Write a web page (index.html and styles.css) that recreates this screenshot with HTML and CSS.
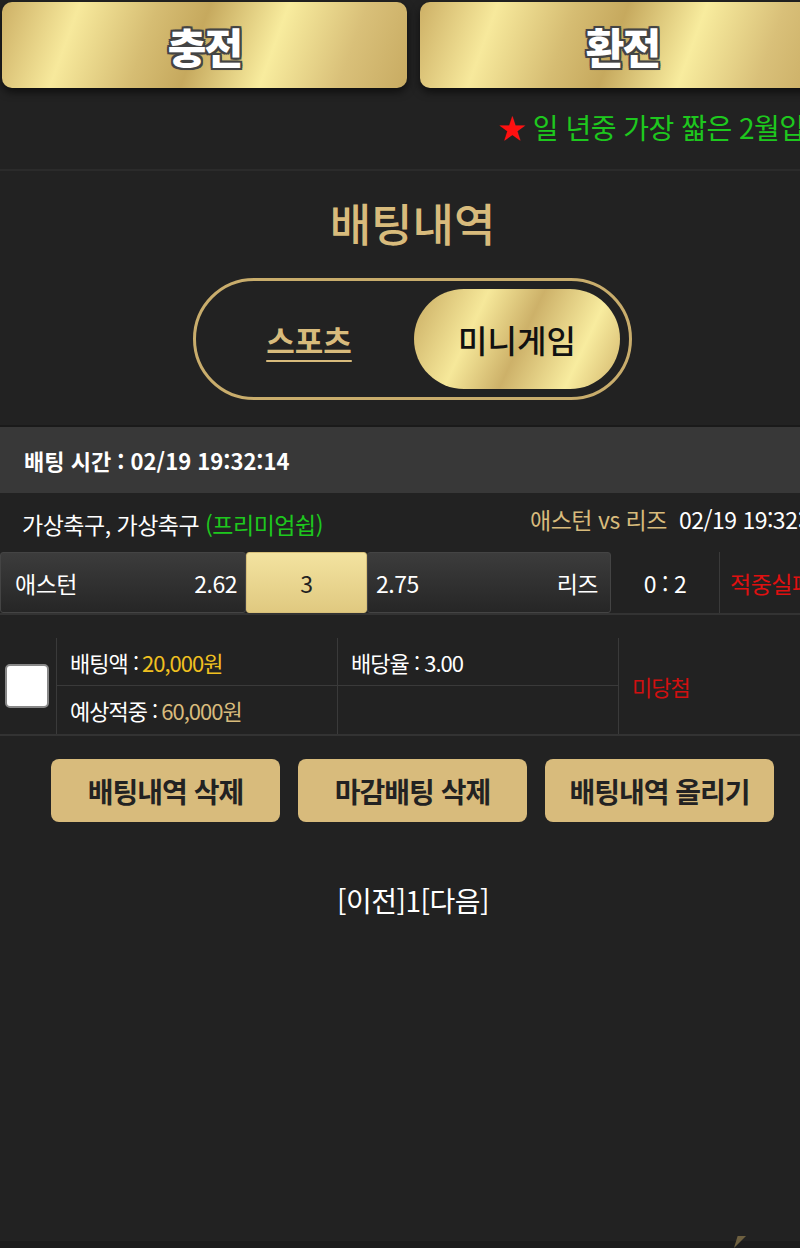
FILE: index.html
```html
<!DOCTYPE html>
<html lang="ko">
<head>
    <meta charset="UTF-8">
    <meta name="viewport" content="width=device-width, initial-scale=1.0">
    <title>배팅내역</title>
    <link rel="stylesheet" href="styles.css">
</head>
<body>
    <div class="top-btns">
        <a class="gold-btn" href="#">충전</a>
        <a class="gold-btn" href="#">환전</a>
    </div>

    <div class="notice">
        <span class="star">★</span> 일 년중 가장 짧은 2월입
    </div>

    <h2 class="title">배팅내역</h2>

    <div class="tabs">
        <a class="tab" href="#">스포츠</a>
        <a class="tab active" href="#">미니게임</a>
    </div>

    <div class="bet-time">배팅 시간 : 02/19 19:32:14</div>

    <div class="game-info">
        <span>가상축구, 가상축구 <span class="league">(프리미엄쉽)</span></span>
        <span class="match"><span class="teams">애스턴 vs 리즈</span> 02/19 19:32:00</span>
    </div>

    <div class="odds-row">
        <div class="odd team-home"><span>애스턴</span><span>2.62</span></div>
        <div class="odd draw">3</div>
        <div class="odd team-away"><span>2.75</span><span>리즈</span></div>
        <div class="score">0 : 2</div>
        <div class="result">적중실패</div>
    </div>

    <div class="detail">
        <div class="check"><span class="box"></span></div>
        <div class="cell">배팅액 : <span class="amount">20,000원</span></div>
        <div class="cell">배당율 : 3.00</div>
        <div class="cell status">미당첨</div>
        <div class="cell">예상적중 : <span class="win">60,000원</span></div>
        <div class="cell"></div>
    </div>

    <div class="actions">
        <button type="button">배팅내역 삭제</button>
        <button type="button">마감배팅 삭제</button>
        <button type="button">배팅내역 올리기</button>
    </div>

    <div class="paging">[이전]1[다음]</div>

    <div class="bottom-bar"><span class="corner"></span></div>
</body>
</html>
```

FILE: styles.css
```css
body {
    font-family: "Noto Sans CJK KR", "Noto Sans", sans-serif;
    background-color: #222222;
    color: #fff;
    margin: 0;
    padding: 0;
    width: 800px;
    height: 1248px;
    overflow: hidden;
    position: relative;
}

a {
    text-decoration: none;
}

.top-btns {
    display: grid;
    grid-template-columns: 405px 405px;
    gap: 13px;
    padding: 2px 0 0 2px;
}

.gold-btn {
    height: 86px;
    border-radius: 10px;
    background: linear-gradient(110deg, #cdb066 0%, #f7e99c 18%, #d6bd73 36%, #c6a95e 48%, #f8ec9e 66%, #d9c079 84%, #c8ab62 100%);
    box-shadow: 0 4px 8px rgba(0, 0, 0, 0.6);
    display: flex;
    align-items: center;
    justify-content: center;
    font-size: 42px;
    font-weight: 900;
    color: #fff;
    letter-spacing: -2px;
    text-shadow:
        2px 0 0 #444, -2px 0 0 #444, 0 2px 0 #444, 0 -2px 0 #444,
        2px 2px 0 #444, -2px -2px 0 #444, 2px -2px 0 #444, -2px 2px 0 #444,
        0 0 3px #222;
}

.notice {
    margin: 19px 0 0 498px;
    white-space: nowrap;
    color: #1ec81e;
    font-size: 28px;
    letter-spacing: -0.5px;
    height: 44px;
    line-height: 40px;
}

.star {
    color: #ff1010;
}

.title {
    border-top: 2px solid #2b2b2b;
    margin: 18px 0 0;
    padding-top: 19px;
    text-align: center;
    color: #d8bb7c;
    font-size: 45px;
    font-weight: 500;
    line-height: 66px;
    padding-left: 25px;
}

.tabs {
    margin: 22px 0 0 193px;
    width: 439px;
    height: 122px;
    box-sizing: border-box;
    border: 3px solid #c9ad6c;
    border-radius: 61px;
    display: flex;
    align-items: center;
    padding: 0 9px 0 8px;
}

.tab {
    flex: 1;
    text-align: center;
    font-size: 31px;
    font-weight: 700;
    color: #d8bb7c;
    text-decoration: underline;
    text-underline-offset: 7px;
    text-decoration-thickness: 2px;
}

.tab.active {
    flex: 0 0 206px;
    height: 100px;
    line-height: 100px;
    border-radius: 50px;
    color: #111;
    text-decoration: none;
    font-weight: 500;
    font-size: 32px;
    background: linear-gradient(115deg, #c8ab62 0%, #f6e89a 30%, #cdb169 52%, #f8ec9f 78%, #d2b56c 100%);
}

.bet-time {
    margin-top: 25px;
    border-top: 2px solid #1a1a1a;
    background-color: #383838;
    height: 66px;
    line-height: 66px;
    padding-left: 24px;
    font-size: 22px;
    font-weight: 700;
}

.game-info {
    display: grid;
    grid-template-columns: 530px auto;
    height: 59px;
    align-items: center;
    white-space: nowrap;
    font-size: 23px;
    letter-spacing: -0.5px;
    padding-left: 22px;
}

.game-info > span:first-child {
    margin-top: 2px;
}

.league {
    color: #1ec81e;
}

.match {
    margin-left: -22px;
    margin-top: -8px;
}

.teams {
    color: #d8bb7c;
    margin-right: 6px;
}

.odds-row {
    display: flex;
    height: 61px;
    white-space: nowrap;
    font-size: 23px;
    letter-spacing: -0.5px;
    border-bottom: 2px solid #333;
}

.odds-row > div {
    flex-shrink: 0;
}

.odd {
    display: flex;
    align-items: center;
    justify-content: space-between;
    box-sizing: border-box;
    border-radius: 3px;
    background: linear-gradient(#3c3c3c, #262626);
    border: 1px solid #444;
}

.team-home {
    width: 246px;
    padding: 0 8px 0 14px;
}

.draw {
    width: 121px;
    justify-content: center;
    background: linear-gradient(#f3e3a0, #e0c980);
    border-color: #d8c07a;
    color: #222;
}

.team-away {
    width: 244px;
    padding: 0 12px 0 8px;
}

.score {
    width: 108px;
    display: flex;
    align-items: center;
    justify-content: center;
    border-right: 1px solid #3a3a3a;
}

.result {
    padding-left: 10px;
    display: flex;
    align-items: center;
    color: #e01010;
}

.detail {
    margin-top: 23px;
    display: grid;
    grid-template-columns: 56px 281px 281px 1fr;
    grid-template-rows: 48px 48px;
    border-bottom: 2px solid #333;
    font-size: 22px;
    letter-spacing: -1px;
}

.check {
    grid-row: 1 / 3;
    display: flex;
    align-items: center;
    padding-left: 5px;
}

.box {
    width: 44px;
    height: 44px;
    box-sizing: border-box;
    background: #fff;
    border: 2px solid #888;
    border-radius: 5px;
}

.cell {
    border-left: 1px solid #3a3a3a;
    display: flex;
    align-items: center;
    padding-left: 13px;
}

.cell:nth-child(2),
.cell:nth-child(3) {
    border-bottom: 1px solid #3a3a3a;
}

.status {
    grid-column: 4;
    grid-row: 1 / 3;
    color: #d01010;
}

.amount {
    color: #f0c020;
    margin-left: 4px;
}

.win {
    color: #d8bb7c;
    margin-left: 4px;
}

.actions {
    display: flex;
    gap: 18px;
    padding-left: 51px;
    margin-top: 23px;
}

.actions button {
    width: 229px;
    height: 63px;
    border: none;
    border-radius: 8px;
    background-color: #d8bb7c;
    color: #222;
    font-family: inherit;
    font-size: 28px;
    font-weight: 700;
    letter-spacing: -1px;
    cursor: pointer;
}

.paging {
    margin-top: 58px;
    text-align: center;
    font-size: 28px;
    letter-spacing: -0.5px;
    padding-left: 26px;
}

.bottom-bar {
    position: absolute;
    left: 0;
    right: 0;
    bottom: 0;
    height: 7px;
    background-color: #1c1c1c;
}

.corner {
    position: absolute;
    left: 734px;
    bottom: 0;
    width: 12px;
    height: 12px;
    background: #6e6040;
    clip-path: polygon(30% 0, 100% 0, 0 100%);
}
```
